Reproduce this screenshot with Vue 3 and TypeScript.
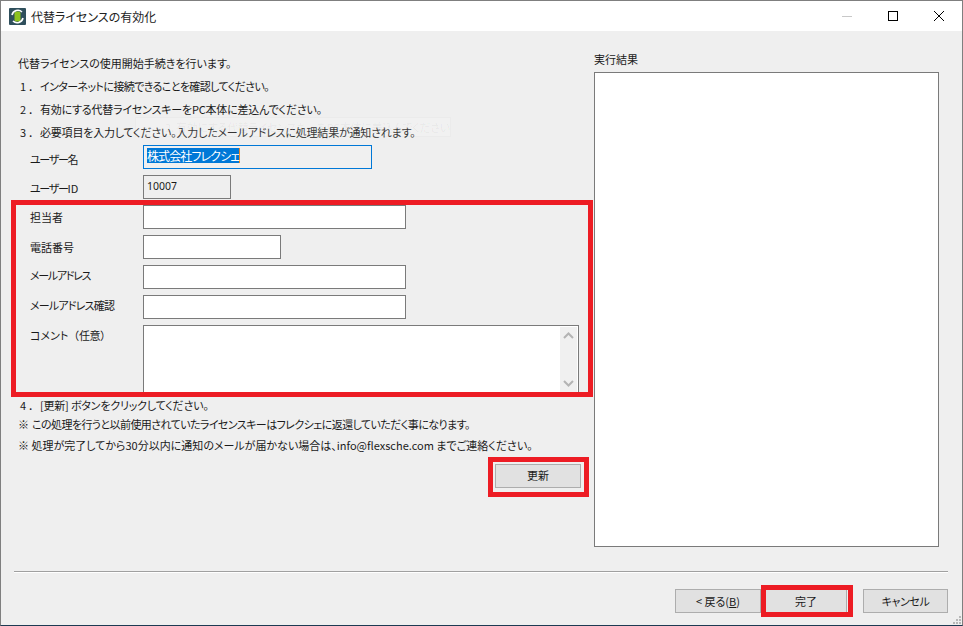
<script setup lang="ts">
interface Row { label: string; cls: string; lblCls: string; }
const rows: Row[] = [
  { label: '担当者', cls: 'w-long', lblCls: '' },
  { label: '電話番号', cls: 'w-short', lblCls: '' },
  { label: 'メールアドレス', cls: 'w-long', lblCls: 'lbl-up kana' },
  { label: 'メールアドレス確認', cls: 'w-long', lblCls: 'lbl-up kana2' },
];
</script>

<template>
  <div class="window">
    <header class="titlebar">
      <svg class="appicon" width="17" height="17" viewBox="0 0 17 17">
        <rect width="17" height="17" rx="1" fill="#2f4f5c" />
        <rect x="5.5" y="3.5" width="6" height="10" rx="1.5" fill="#8dc21f" />
        <path d="M3 7 A6 6 0 0 1 13 4" fill="none" stroke="#fff" stroke-width="1.6" />
        <path d="M14 10 A6 6 0 0 1 4 13" fill="none" stroke="#fff" stroke-width="1.6" />
      </svg>
      <span class="title">代替ライセンスの有効化</span>
      <div class="controls">
        <svg class="ctl" width="46" height="30" viewBox="0 0 46 30"><path d="M18 15.5H28" stroke="#c8c8c8" stroke-width="1" /></svg>
        <svg class="ctl" width="46" height="30" viewBox="0 0 46 30"><rect x="18.5" y="10.5" width="9" height="9" fill="none" stroke="#000" stroke-width="1" /></svg>
        <svg class="ctl" width="46" height="30" viewBox="0 0 46 30"><path d="M18 10L28 20M28 10L18 20" stroke="#000" stroke-width="1" /></svg>
      </div>
    </header>

    <main class="content">
      <section class="left">
        <p class="line intro">代替ライセンスの使用開始手続きを行います。</p>
        <p class="line step s1"><span class="num">1．</span>インターネットに接続できることを確認してください。</p>
        <p class="line step s2"><span class="num">2．</span>有効にする代替ライセンスキーをPC本体に差込んでください。</p>
        <p class="line step s2"><span class="num">3．</span>必要項目を入力してください。入力したメールアドレスに処理結果が通知されます。</p>

        <div class="form">
          <label class="lbl kana lbl-name">ユーザー名</label>
          <div class="field focused w-name"><span class="sel">株式会社フレクシェ</span></div>
          <label class="lbl kana lbl-id">ユーザー<span class="latin">ID</span></label>
          <div class="field readonly w-id">10007</div>
          <template v-for="r in rows" :key="r.label">
            <label class="lbl" :class="r.lblCls">{{ r.label }}</label>
            <div class="field" :class="r.cls"></div>
          </template>
          <label class="lbl lbl-top">コメント<span class="paren">（任意）</span></label>
          <div class="field memo">
            <div class="scroll">
              <svg width="17" height="17" viewBox="0 0 17 17"><path d="M4 11L8.5 6.5L13 11" fill="none" stroke="#b4b4b4" stroke-width="2" /></svg>
              <svg width="17" height="17" viewBox="0 0 17 17"><path d="M4 6L8.5 10.5L13 6" fill="none" stroke="#b4b4b4" stroke-width="2" /></svg>
            </div>
          </div>
        </div>

        <p class="line step s2 after"><span class="num">4．</span>[更新] ボタンをクリックしてください。</p>
        <p class="line note note1"><span class="mark-char">※</span>この処理を行うと以前使用されていたライセンスキーはフレクシェに返還していただく事になります。</p>
        <p class="line note note2">※ 処理が完了してから30分以内に通知のメールが届かない場合は、info@flexsche.com までご連絡ください。</p>
        <div class="update-row"><button class="btn update">更新</button></div>
      </section>

      <aside class="right">
        <div class="result-label">実行結果</div>
        <div class="result"></div>
      </aside>
    </main>

    <footer class="footer">
      <div class="sep"></div>
      <div class="actions">
        <button class="btn back">&lt; 戻る(<u>B</u>)</button>
        <button class="btn done">完了</button>
        <button class="btn cancel">キャンセル</button>
      </div>
    </footer>

    <div class="ghost">2．有効にする代替ライセンスキーをPC本体に差込んでください。</div>
    <div class="mark mark-form"></div>
    <div class="mark mark-update"></div>
    <div class="mark mark-done"></div>
    <svg class="grip" width="10" height="10" viewBox="0 0 10 10" fill="#b8b8b8">
      <rect x="7" y="1" width="2" height="2" /><rect x="4" y="4" width="2" height="2" /><rect x="7" y="4" width="2" height="2" />
      <rect x="1" y="7" width="2" height="2" /><rect x="4" y="7" width="2" height="2" /><rect x="7" y="7" width="2" height="2" />
    </svg>
  </div>
</template>

<style>
html, body { margin: 0; background: #efefef; }
</style>

<style scoped>
* { box-sizing: border-box; }
.window {
  position: relative;
  width: 963px;
  height: 626px;
  overflow: hidden;
  display: flex;
  flex-direction: column;
  background: #efefef;
  border: 1px solid #7f7f7f;
  border-bottom-color: #1d3a52;
  font-family: "Noto Sans CJK JP", "Noto Sans", sans-serif;
  font-size: 11px;
  font-feature-settings: "palt";
  color: #1a1a1a;
}
.titlebar {
  height: 30px;
  flex: none;
  display: flex;
  align-items: center;
  background: #fff;
  padding-left: 8px;
}
.appicon { flex: none; }
.title { margin-left: 5px; font-size: 12px; color: #222; }
.controls { margin-left: auto; display: flex; }
.ctl { display: block; }

.content { flex: 1; min-height: 0; display: flex; }
.left { width: 593px; flex: none; padding: 21px 0 0 17px; }
.line { margin: 0; height: 23px; line-height: 23px; white-space: nowrap; }
.step { padding-left: 2px; }
.s1 { letter-spacing: -0.6px; }
.s2 { letter-spacing: -0.2px; }
.num { display: inline-block; width: 20px; letter-spacing: 2px; font-feature-settings: normal; }
.form {
  margin: 1px 0 0 12px;
  display: grid;
  grid-template-columns: 113px 1fr;
  row-gap: 6px;
}
.lbl { height: 24px; line-height: 24px; font-size: 11px; }
.lbl-name { line-height: 28px; }
.lbl-id { line-height: 26px; }
.latin { letter-spacing: 0; }
.kana { letter-spacing: -1.3px; }
.kana2 { letter-spacing: -0.8px; }
.lbl-up { line-height: 20px; }
.lbl-top { height: auto; line-height: 20px; }
.paren { font-feature-settings: normal; letter-spacing: -0.4px; }
.field {
  height: 24px;
  background: #fff;
  border: 1px solid #7a7a7a;
  padding: 0 3px;
  line-height: 20px;
}
.w-long { width: 263px; }
.w-short { width: 138px; }
.w-name { width: 229px; background: #f0f0f0; }
.w-id { width: 88px; }
.focused { border-color: #0078d7; }
.sel {
  background: #0078d7;
  color: #fff;
  display: inline-block;
  vertical-align: top;
  margin-top: 2px;
  line-height: 15px;
  font-size: 12px;
  letter-spacing: -0.9px;
  border-right: 1px solid #e8862a;
}
.readonly { background: #efefef; font-family: "Noto Sans", sans-serif; font-size: 10.5px; }
.memo {
  position: relative;
  width: 436px;
  height: 67px;
  padding: 0;
  border-bottom: 0;
}
.scroll {
  position: absolute;
  top: 1px;
  right: 1px;
  bottom: 0;
  width: 17px;
  background: #f0f0f0;
  display: flex;
  flex-direction: column;
  justify-content: space-between;
}
.scroll svg { display: block; }
.after { margin-top: 2px; height: 22px; line-height: 22px; }
.note { font-size: 11px; }
.mark-char { display: inline-block; width: 14px; letter-spacing: 0; }
.note1 { height: 19px; line-height: 16px; letter-spacing: -0.57px; }
.note2 { height: 22px; line-height: 20px; }
.update-row { display: flex; margin-top: 7px; padding-right: 13px; justify-content: flex-end; }

.btn {
  font-family: inherit;
  font-feature-settings: inherit;
  font-size: 11px;
  color: #1a1a1a;
  background: #e1e1e1;
  border: 1px solid #adadad;
  padding: 0;
  height: 24px;
}
.update { width: 86px; padding-bottom: 3px; }

.right { width: 345px; flex: none; display: flex; flex-direction: column; }
.result-label { height: 41px; padding-top: 18px; line-height: 20px; font-size: 11px; }
.result { width: 345px; height: 475px; background: #fff; border: 1px solid #7a7a7a; }

.footer { flex: none; height: 54px; padding: 0 14px 0 13px; }
.sep { height: 2px; background: #a0a0a0; border-bottom: 1px solid #fff; }
.actions { display: flex; justify-content: flex-end; margin-top: 16px; }
.back { width: 86px; }
.done { width: 82px; margin-left: 4px; border-top-color: #0078d7; border-bottom-color: #0078d7; }
.cancel { width: 85px; margin-left: 16px; letter-spacing: -0.4px; }

.ghost {
  position: absolute;
  left: 134px;
  top: 116px;
  width: 316px;
  height: 20px;
  padding-left: 29px;
  line-height: 19px;
  font-size: 11px;
  letter-spacing: -0.3px;
  color: rgba(0, 0, 0, 0.05);
  background: rgba(255, 255, 255, 0.12);
  border: 1px solid rgba(0, 0, 0, 0.025);
  white-space: nowrap;
}
.mark { position: absolute; border: 5px solid #ed1c24; pointer-events: none; }
.mark-form { left: 10px; top: 199px; width: 582px; height: 197px; }
.mark-update { left: 487px; top: 456px; width: 101px; height: 40px; }
.mark-done { left: 760px; top: 584px; width: 92px; height: 32px; }
.grip { position: absolute; right: 0; bottom: 0; }
</style>
